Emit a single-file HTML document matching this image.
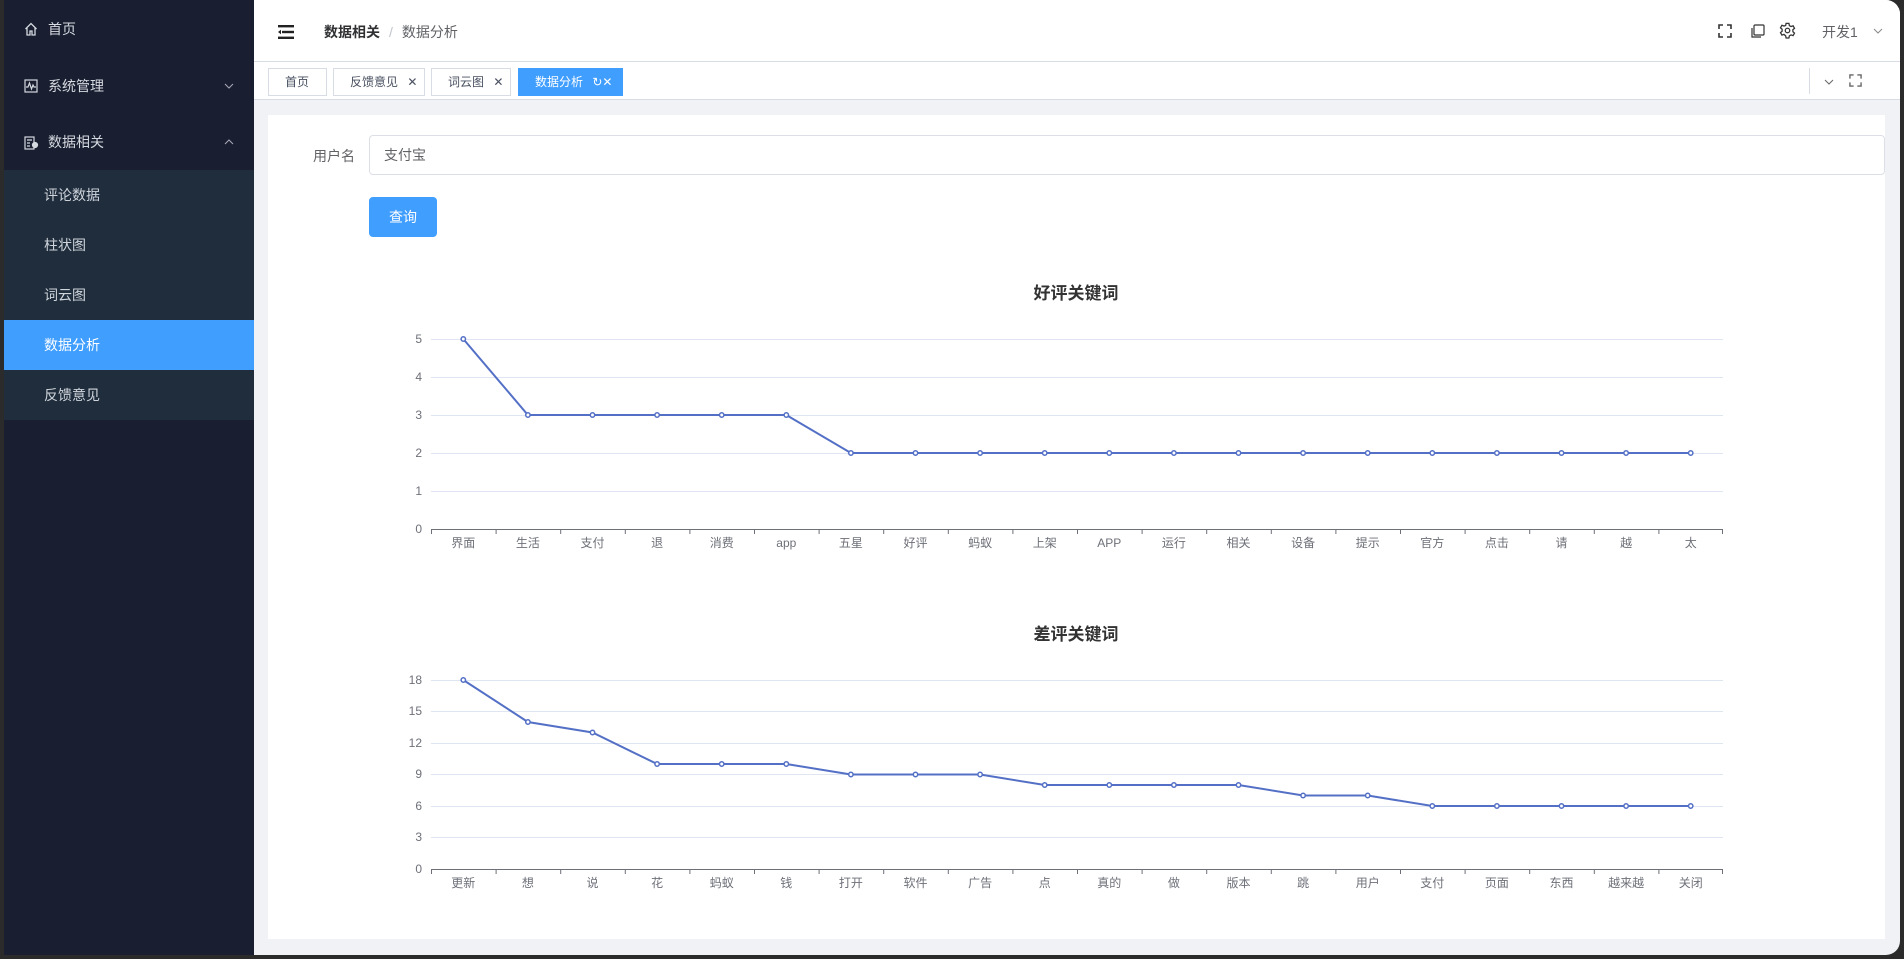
<!DOCTYPE html>
<html><head><meta charset="utf-8"><style>
*{margin:0;padding:0;box-sizing:border-box}
body{width:1904px;height:959px;background:#2b2b2b;font-family:"Liberation Sans","Noto Sans CJK SC",sans-serif;position:relative;overflow:hidden}
.win{position:absolute;left:4px;top:0;width:1896px;height:955px;background:#f0f2f5;border-radius:0 14px 14px 0;overflow:hidden}
.side{position:absolute;left:0;top:0;width:250px;height:955px;background:#191f30}
.mi{position:absolute;left:0;width:250px;height:56px;color:#d5d9e0;font-size:14px;line-height:56px;padding-left:44px}
.sub{position:absolute;left:0;top:170px;width:250px;height:250px;background:#1f2d3d}
.si{position:absolute;left:0;width:250px;height:50px;line-height:50px;padding-left:40px;color:#d0d5dc;font-size:14px}
.si.act{background:#409eff;color:#fff}
.hdr{position:absolute;left:250px;top:0;right:0;height:62px;background:#fff;border-bottom:1px solid #d8dce5}
.tabs{position:absolute;left:250px;top:62px;right:0;height:38px;background:#fff;border-bottom:1px solid #d8dce5}
.tab{position:absolute;top:6px;height:28px;border:1px solid #d8dce5;font-size:12px;line-height:26px;color:#495060;padding-left:16px;background:#fff}
.card{position:absolute;left:264px;top:115px;width:1617px;height:824px;background:#fff}
</style></head><body>
<div class="win">
<div class="side">
 <div class="mi" style="top:1px"><svg style="position:absolute;left:20px;top:21px" width="14" height="14" viewBox="0 0 14 14" fill="none" stroke="#d5d9e0" stroke-width="1.3"><path d="M1.5 7 7 1.5 12.5 7M3 5.5V13h3V9h2v4h3V5.5"/></svg>首页</div>
 <div class="mi" style="top:58px"><svg style="position:absolute;left:20px;top:21px" width="14" height="14" viewBox="0 0 14 14" fill="none" stroke="#d5d9e0" stroke-width="1.2"><rect x="1" y="1" width="12" height="12"/><path d="M2 8h2l1.5-4 2 6 1.5-4 1 2h2"/></svg>系统管理<svg style="position:absolute;left:220px;top:25px" width="10" height="6" viewBox="0 0 10 6" fill="none" stroke="#aab" stroke-width="1"><path d="M1 1l4 4 4-4"/></svg></div>
 <div class="mi" style="top:114px"><svg style="position:absolute;left:20px;top:21px" width="15" height="15" viewBox="0 0 15 15" fill="none" stroke="#d5d9e0" stroke-width="1.2"><rect x="1" y="2" width="9" height="12"/><path d="M3 5h5M3 8h3M3 11h3"/><circle cx="11" cy="10" r="2.5" fill="#d5d9e0"/></svg>数据相关<svg style="position:absolute;left:220px;top:25px" width="10" height="6" viewBox="0 0 10 6" fill="none" stroke="#aab" stroke-width="1"><path d="M1 5l4-4 4 4"/></svg></div>
 <div class="sub">
  <div class="si" style="top:0">评论数据</div>
  <div class="si" style="top:50px">柱状图</div>
  <div class="si" style="top:100px">词云图</div>
  <div class="si act" style="top:150px">数据分析</div>
  <div class="si" style="top:200px">反馈意见</div>
 </div>
</div>
<div class="hdr">
 <svg style="position:absolute;left:24px;top:25px" width="16" height="14" viewBox="0 0 16 14"><rect x="0" y="0" width="16" height="2.4" fill="#222"/><rect x="4" y="5.8" width="12" height="2.4" fill="#222"/><rect x="0" y="11.6" width="16" height="2.4" fill="#222"/><path d="M0 7 3 4.8v4.4z" fill="#222"/></svg>
 <div style="position:absolute;left:70px;top:22px;font-size:14px;color:#303133"><b>数据相关</b><span style="color:#c0c4cc;margin:0 9px">/</span><span style="color:#606266">数据分析</span></div>
 <svg style="position:absolute;left:1464px;top:24px" width="14" height="14" viewBox="0 0 14 14" fill="none" stroke="#333" stroke-width="1.6"><path d="M1 5V1h4M9 1h4v4M13 9v4H9M5 13H1V9"/></svg>
 <svg style="position:absolute;left:1496px;top:24px" width="15" height="15" viewBox="0 0 15 15" fill="none" stroke="#333" stroke-width="1.2"><rect x="4" y="1" width="10" height="10" rx="1"/><path d="M2 4v9h9"/></svg>
 <svg style="position:absolute;left:1525px;top:22px" width="17" height="17" viewBox="0 0 24 24" fill="none" stroke="#333" stroke-width="1.8"><circle cx="12" cy="12" r="3.2"/><path d="M10 2h4l.6 3 2.4 1.4 2.9-1 2 3.5-2.3 2v2.8l2.3 2-2 3.5-2.9-1-2.4 1.4-.6 3h-4l-.6-3L7 17.5l-2.9 1-2-3.5 2.3-2v-2.8l-2.3-2 2-3.5 2.9 1L9.4 5z"/></svg>
 <div style="position:absolute;left:1568px;top:22px;font-size:14px;color:#606266">开发1</div>
 <svg style="position:absolute;left:1619px;top:28px" width="10" height="6" viewBox="0 0 10 6" fill="none" stroke="#888" stroke-width="1"><path d="M1 1l4 4 4-4"/></svg>
</div>
<div class="tabs">
 <div class="tab" style="left:14px;width:59px">首页</div>
 <div class="tab" style="left:79px;width:92px">反馈意见 <span style="margin-left:6px">✕</span></div>
 <div class="tab" style="left:177px;width:80px">词云图 <span style="margin-left:6px">✕</span></div>
 <div class="tab" style="left:264px;width:105px;background:#409eff;border-color:#409eff;color:#fff">数据分析 <span style="margin-left:6px">↻✕</span></div>
 <div style="position:absolute;left:1555px;top:6px;width:1px;height:26px;background:#d8dce5"></div>
 <svg style="position:absolute;left:1570px;top:17px" width="10" height="6" viewBox="0 0 10 6" fill="none" stroke="#666" stroke-width="1"><path d="M1 1l4 4 4-4"/></svg>
 <svg style="position:absolute;left:1595px;top:12px" width="13" height="13" viewBox="0 0 14 14" fill="none" stroke="#666" stroke-width="1.5"><path d="M1 5V1h4M9 1h4v4M13 9v4H9M5 13H1V9"/></svg>
</div>
<div class="card">
 <div style="position:absolute;left:45px;top:31px;font-size:14px;color:#606266">用户名</div>
 <div style="position:absolute;left:101px;top:20px;width:1516px;height:40px;border:1px solid #dcdfe6;border-radius:4px;font-size:14px;color:#606266;line-height:38px;padding-left:14px">支付宝</div>
 <div style="position:absolute;left:101px;top:82px;width:68px;height:40px;background:#409eff;border-radius:4px;color:#fff;font-size:14px;line-height:40px;text-align:center">查询</div>
</div>
</div>
<svg style="position:absolute;left:0;top:0" width="1904" height="959" font-family="Liberation Sans,Noto Sans CJK SC,sans-serif">
<g font-size="17" font-weight="bold" fill="#333" text-anchor="middle"><text x="1076" y="299">好评关键词</text><text x="1076" y="640">差评关键词</text></g>
<g stroke="#e0e6f1" stroke-width="1"><path d="M431 339.5H1723M431 377.5H1723M431 415.5H1723M431 453.5H1723M431 491.5H1723"/>
<path d="M431 680.5H1723M431 711.5H1723M431 743.5H1723M431 774.5H1723M431 806.5H1723M431 837.5H1723"/></g>
<g stroke="#6e7079" stroke-width="1" fill="none"><path d="M431 529.5H1723M431 869.5H1723"/>
<path d="M431.5 529v5M496.1 529v5M560.7 529v5M625.3 529v5M689.9 529v5M754.5 529v5M819.1 529v5M883.7 529v5M948.3 529v5M1012.9 529v5M1077.5 529v5M1142.1 529v5M1206.7 529v5M1271.3 529v5M1335.9 529v5M1400.5 529v5M1465.1 529v5M1529.7 529v5M1594.3 529v5M1658.9 529v5M1722.5 529v5"/>
<path d="M431.5 869v5M496.1 869v5M560.7 869v5M625.3 869v5M689.9 869v5M754.5 869v5M819.1 869v5M883.7 869v5M948.3 869v5M1012.9 869v5M1077.5 869v5M1142.1 869v5M1206.7 869v5M1271.3 869v5M1335.9 869v5M1400.5 869v5M1465.1 869v5M1529.7 869v5M1594.3 869v5M1658.9 869v5M1722.5 869v5"/></g>
<g font-size="12" fill="#6e7079" text-anchor="end"><text x="422" y="343">5</text><text x="422" y="381">4</text><text x="422" y="419">3</text><text x="422" y="457">2</text><text x="422" y="495">1</text><text x="422" y="533">0</text>
<text x="422" y="684">18</text><text x="422" y="715">15</text><text x="422" y="747">12</text><text x="422" y="778">9</text><text x="422" y="810">6</text><text x="422" y="841">3</text><text x="422" y="873">0</text></g>
<g font-size="12" fill="#6e7079" text-anchor="middle">
<text x="463.3" y="547">界面</text><text x="527.9" y="547">生活</text><text x="592.5" y="547">支付</text><text x="657.1" y="547">退</text><text x="721.7" y="547">消费</text><text x="786.3" y="547">app</text><text x="850.9" y="547">五星</text><text x="915.5" y="547">好评</text><text x="980.1" y="547">蚂蚁</text><text x="1044.7" y="547">上架</text><text x="1109.3" y="547">APP</text><text x="1173.9" y="547">运行</text><text x="1238.5" y="547">相关</text><text x="1303.1" y="547">设备</text><text x="1367.7" y="547">提示</text><text x="1432.3" y="547">官方</text><text x="1496.9" y="547">点击</text><text x="1561.5" y="547">请</text><text x="1626.1" y="547">越</text><text x="1690.7" y="547">太</text>
<text x="463.3" y="887">更新</text><text x="527.9" y="887">想</text><text x="592.5" y="887">说</text><text x="657.1" y="887">花</text><text x="721.7" y="887">蚂蚁</text><text x="786.3" y="887">钱</text><text x="850.9" y="887">打开</text><text x="915.5" y="887">软件</text><text x="980.1" y="887">广告</text><text x="1044.7" y="887">点</text><text x="1109.3" y="887">真的</text><text x="1173.9" y="887">做</text><text x="1238.5" y="887">版本</text><text x="1303.1" y="887">跳</text><text x="1367.7" y="887">用户</text><text x="1432.3" y="887">支付</text><text x="1496.9" y="887">页面</text><text x="1561.5" y="887">东西</text><text x="1626.1" y="887">越来越</text><text x="1690.7" y="887">关闭</text></g>
<g fill="none" stroke="#5470c6" stroke-width="2">
<polyline points="463.3,339 527.9,415 592.5,415 657.1,415 721.7,415 786.3,415 850.9,453 915.5,453 980.1,453 1044.7,453 1109.3,453 1173.9,453 1238.5,453 1303.1,453 1367.7,453 1432.3,453 1496.9,453 1561.5,453 1626.1,453 1690.7,453"/>
<polyline points="463.3,680 527.9,722 592.5,732.5 657.1,764 721.7,764 786.3,764 850.9,774.5 915.5,774.5 980.1,774.5 1044.7,785 1109.3,785 1173.9,785 1238.5,785 1303.1,795.5 1367.7,795.5 1432.3,806 1496.9,806 1561.5,806 1626.1,806 1690.7,806"/></g>
<g fill="#fff" stroke="#5470c6" stroke-width="1.5">
<circle cx="463.3" cy="339" r="2.2"/><circle cx="527.9" cy="415" r="2.2"/><circle cx="592.5" cy="415" r="2.2"/><circle cx="657.1" cy="415" r="2.2"/><circle cx="721.7" cy="415" r="2.2"/><circle cx="786.3" cy="415" r="2.2"/><circle cx="850.9" cy="453" r="2.2"/><circle cx="915.5" cy="453" r="2.2"/><circle cx="980.1" cy="453" r="2.2"/><circle cx="1044.7" cy="453" r="2.2"/><circle cx="1109.3" cy="453" r="2.2"/><circle cx="1173.9" cy="453" r="2.2"/><circle cx="1238.5" cy="453" r="2.2"/><circle cx="1303.1" cy="453" r="2.2"/><circle cx="1367.7" cy="453" r="2.2"/><circle cx="1432.3" cy="453" r="2.2"/><circle cx="1496.9" cy="453" r="2.2"/><circle cx="1561.5" cy="453" r="2.2"/><circle cx="1626.1" cy="453" r="2.2"/><circle cx="1690.7" cy="453" r="2.2"/>
<circle cx="463.3" cy="680" r="2.2"/><circle cx="527.9" cy="722" r="2.2"/><circle cx="592.5" cy="732.5" r="2.2"/><circle cx="657.1" cy="764" r="2.2"/><circle cx="721.7" cy="764" r="2.2"/><circle cx="786.3" cy="764" r="2.2"/><circle cx="850.9" cy="774.5" r="2.2"/><circle cx="915.5" cy="774.5" r="2.2"/><circle cx="980.1" cy="774.5" r="2.2"/><circle cx="1044.7" cy="785" r="2.2"/><circle cx="1109.3" cy="785" r="2.2"/><circle cx="1173.9" cy="785" r="2.2"/><circle cx="1238.5" cy="785" r="2.2"/><circle cx="1303.1" cy="795.5" r="2.2"/><circle cx="1367.7" cy="795.5" r="2.2"/><circle cx="1432.3" cy="806" r="2.2"/><circle cx="1496.9" cy="806" r="2.2"/><circle cx="1561.5" cy="806" r="2.2"/><circle cx="1626.1" cy="806" r="2.2"/><circle cx="1690.7" cy="806" r="2.2"/></g>
</svg>
</body></html>
